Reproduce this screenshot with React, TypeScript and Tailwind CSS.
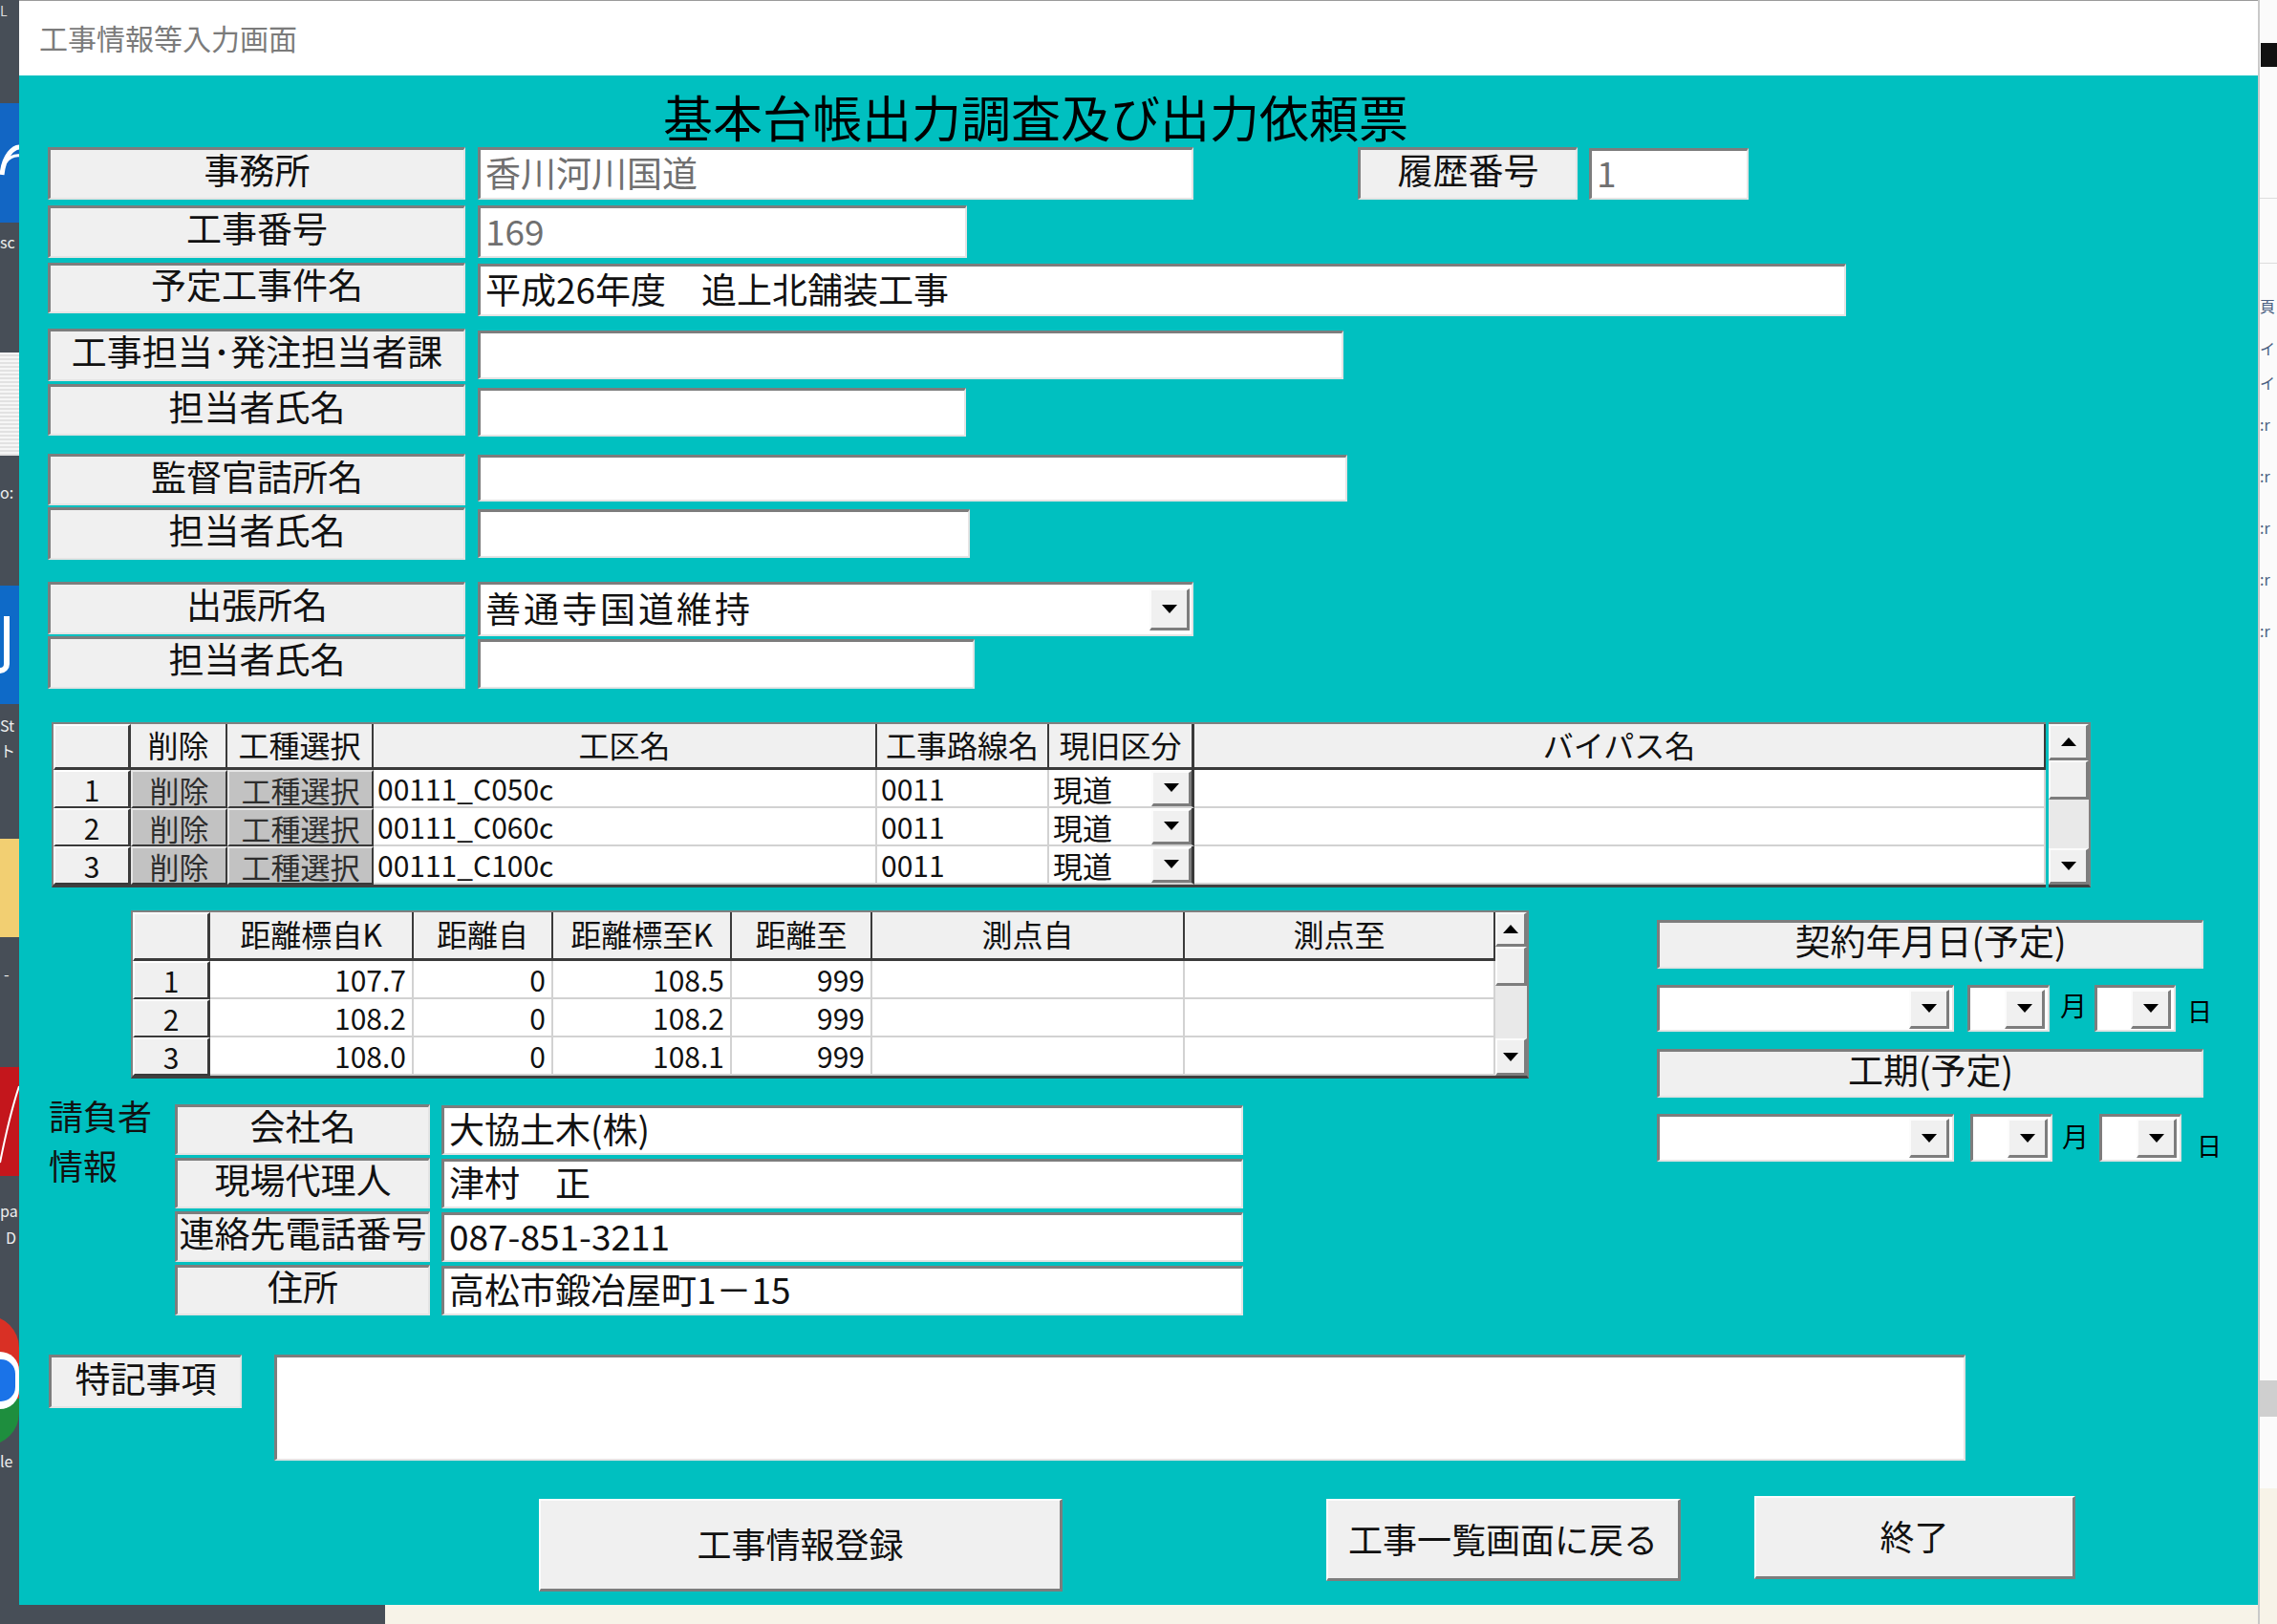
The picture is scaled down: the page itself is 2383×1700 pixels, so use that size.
import React from "react";

type P = { className?: string; children?: React.ReactNode };

const SUNKEN =
  "border-t-[3px] border-l-[3px] border-b-2 border-r-2 border-t-[#7d7d7d] border-l-[#7d7d7d] border-b-[#e4e4e4] border-r-[#e4e4e4]";
const RAISED =
  "border-t-2 border-l-2 border-b-[3px] border-r-[3px] border-t-[#fcfcfc] border-l-[#fcfcfc] border-b-[#7d7d7d] border-r-[#7d7d7d]";

function Label({ className = "", children }: P) {
  return (
    <div
      className={`${SUNKEN} bg-[#f0f0f0] flex items-center justify-center pb-[9px] text-[37px] leading-none text-[#111] whitespace-nowrap shrink-0 ${className}`}
    >
      {children}
    </div>
  );
}

function Field({ className = "", children, gray = false }: P & { gray?: boolean }) {
  return (
    <div
      className={`${SUNKEN} bg-white flex items-center pl-[5px] pb-[4px] text-[37px] leading-none whitespace-nowrap shrink-0 ${
        gray ? "text-[#707070]" : "text-[#111]"
      } ${className}`}
    >
      {children}
    </div>
  );
}

function Tri({ up = false }: { up?: boolean }) {
  return (
    <svg width="16" height="9" viewBox="0 0 16 9">
      <polygon points={up ? "0,9 16,9 8,0" : "0,0 16,0 8,9"} fill="#000" />
    </svg>
  );
}

function DropBtn({ className = "" }: P) {
  return (
    <div className={`${RAISED} bg-[#f0f0f0] flex items-center justify-center shrink-0 ${className}`}>
      <Tri />
    </div>
  );
}

function Combo({ className = "", btn = "", children }: P & { btn?: string }) {
  return (
    <div className={`${SUNKEN} bg-white flex items-center justify-between shrink-0 ${className}`}>
      <div className="pl-[5px] pb-[4px] text-[37px] leading-none whitespace-nowrap tracking-[3px]">{children}</div>
      <DropBtn className={btn} />
    </div>
  );
}

function Button({ className = "", children }: P) {
  return (
    <div
      className={`${RAISED} bg-[#f0f0f0] flex items-center justify-center pb-[4px] text-[36px] leading-none text-[#111] whitespace-nowrap shrink-0 ${className}`}
    >
      {children}
    </div>
  );
}

function VScroll({ className = "", upH, thumbH, downH }: P & { upH: string; thumbH: string; downH: string }) {
  return (
    <div className={`flex flex-col bg-[#f0f0f0] border-t-2 border-b-[3px] border-r-2 border-t-[#808080] border-b-[#404040] border-r-[#808080] shrink-0 ${className}`}>
      <div className={`${RAISED} bg-[#f0f0f0] flex items-center justify-center ${upH}`}>
        <Tri up />
      </div>
      <div className={`${RAISED} bg-[#f0f0f0] ${thumbH}`} />
      <div className="flex-1 bg-[#e9e9e9]" />
      <div className={`${RAISED} bg-[#f0f0f0] flex items-center justify-center ${downH}`}>
        <Tri />
      </div>
    </div>
  );
}

const HDR =
  "bg-[#f0f0f0] border-r-2 border-b-[3px] border-r-[#3a3a3a] border-b-[#3a3a3a] flex items-center justify-center pb-[4px] text-[32px] leading-none text-[#111] whitespace-nowrap";
const CORNER =
  "bg-[#f0f0f0] border-t-2 border-l-2 border-t-white border-l-white border-r-[3px] border-b-[3px] border-r-[#3a3a3a] border-b-[#3a3a3a]";
const ROWHDR =
  "bg-[#f0f0f0] border-t-2 border-l-2 border-t-white border-l-white border-r-[3px] border-b-2 border-r-[#3a3a3a] border-b-[#3a3a3a] flex items-center justify-center text-[30px] leading-none text-[#111]";
const BTNCELL =
  "bg-[#c2c2c2] border-t-2 border-l-2 border-t-[#e6e6e6] border-l-[#e6e6e6] border-r-2 border-b-2 border-r-[#3a3a3a] border-b-[#3a3a3a] flex items-center justify-center text-[31px] leading-none text-[#2e2e2e] whitespace-nowrap";
const CELL =
  "bg-white border-r-2 border-b-2 border-r-[#d2d2d2] border-b-[#d2d2d2] flex items-center pl-[4px] text-[30px] leading-none text-[#111] whitespace-nowrap";
const NUMCELL =
  "bg-white border-r-2 border-b-2 border-r-[#d2d2d2] border-b-[#d2d2d2] flex items-center justify-end pr-[6px] text-[30px] leading-none text-[#111] whitespace-nowrap";

function Grid1() {
  const rows = [
    ["1", "00111_C050c"],
    ["2", "00111_C060c"],
    ["3", "00111_C100c"],
  ];
  return (
    <div className="mt-[35px] ml-[4px] flex h-[173px] shrink-0">
      <div className="w-[2087px] border-t-2 border-l-2 border-b-[3px] border-t-[#808080] border-l-[#808080] border-b-[#404040] grid grid-cols-[81px_101px_153px_527px_180px_152px_891px] grid-rows-[48px_40px_40px_40px]">
        <div className={CORNER} />
        <div className={HDR}>削除</div>
        <div className={HDR}>工種選択</div>
        <div className={HDR}>工区名</div>
        <div className={HDR}>工事路線名</div>
        <div className={`${HDR} border-r-[3px]`}>現旧区分</div>
        <div className={`${HDR} border-r-0`}>バイパス名</div>
        {rows.map((r) => (
          <React.Fragment key={r[0]}>
            <div className={ROWHDR}>{r[0]}</div>
            <div className={BTNCELL}>削除</div>
            <div className={BTNCELL}>工種選択</div>
            <div className={CELL}>{r[1]}</div>
            <div className={CELL}>0011</div>
            <div className="bg-white border-r-[3px] border-b-2 border-r-[#3a3a3a] border-b-[#d2d2d2] flex items-center justify-between text-[31px] leading-none text-[#111]">
              <span className="pl-[4px]">現道</span>
              <DropBtn className="w-[42px] h-[37px]" />
            </div>
            <div className={`${CELL} border-r-0`} />
          </React.Fragment>
        ))}
      </div>
      <VScroll className="ml-[3px] w-[44px]" upH="h-[38px]" thumbH="h-[41px]" downH="h-[38px]" />
    </div>
  );
}

function Grid2() {
  const rows = [
    ["1", "107.7", "0", "108.5", "999"],
    ["2", "108.2", "0", "108.2", "999"],
    ["3", "108.0", "0", "108.1", "999"],
  ];
  return (
    <div className="ml-[87px] flex h-[176px] shrink-0">
      <div className="w-[1428px] border-t-2 border-l-2 border-b-[3px] border-t-[#808080] border-l-[#808080] border-b-[#404040] grid grid-cols-[81px_213px_146px_187px_147px_327px_325px] grid-rows-[51px_40px_40px_40px]">
        <div className={CORNER} />
        <div className={HDR}>距離標自K</div>
        <div className={HDR}>距離自</div>
        <div className={HDR}>距離標至K</div>
        <div className={HDR}>距離至</div>
        <div className={HDR}>測点自</div>
        <div className={`${HDR} border-r-0`}>測点至</div>
        {rows.map((r) => (
          <React.Fragment key={r[0]}>
            <div className={ROWHDR}>{r[0]}</div>
            <div className={NUMCELL}>{r[1]}</div>
            <div className={NUMCELL}>{r[2]}</div>
            <div className={NUMCELL}>{r[3]}</div>
            <div className={NUMCELL}>{r[4]}</div>
            <div className={CELL} />
            <div className={`${CELL} border-r-0`} />
          </React.Fragment>
        ))}
      </div>
      <VScroll className="w-[35px]" upH="h-[36px]" thumbH="h-[41px]" downH="h-[39px]" />
    </div>
  );
}

function RightPanel() {
  return (
    <div className="ml-[134px] mt-[10px] flex flex-col w-[572px] shrink-0">
      <Label className="w-[572px] h-[51px] text-[36px]">契約年月日(予定)</Label>
      <div className="mt-[17px] flex items-center h-[49px]">
        <Combo className="w-[311px] h-[49px]" btn="w-[42px] h-[41px] mr-[3px]" />
        <Combo className="ml-[14px] w-[86px] h-[49px]" btn="w-[42px] h-[41px] mr-[3px]" />
        <span className="ml-[11px] mb-[8px] text-[28px] leading-none text-black">月</span>
        <Combo className="ml-[8px] w-[85px] h-[49px]" btn="w-[42px] h-[41px] mr-[3px]" />
        <span className="ml-[12px] mt-[4px] text-[26px] leading-none text-black">日</span>
      </div>
      <Label className="mt-[18px] w-[572px] h-[51px] text-[36px]">工期(予定)</Label>
      <div className="mt-[17px] flex items-center h-[50px]">
        <Combo className="w-[311px] h-[50px]" btn="w-[42px] h-[41px] mr-[3px]" />
        <Combo className="ml-[17px] w-[86px] h-[50px]" btn="w-[42px] h-[41px] mr-[3px]" />
        <span className="ml-[10px] mb-[4px] text-[28px] leading-none text-black">月</span>
        <Combo className="ml-[11px] w-[86px] h-[50px]" btn="w-[42px] h-[41px] mr-[3px]" />
        <span className="ml-[16px] mt-[16px] text-[26px] leading-none text-black">日</span>
      </div>
    </div>
  );
}

function LeftStrip() {
  return (
    <div className="w-[20px] h-[1700px] bg-[#474e57] flex flex-col overflow-hidden shrink-0 text-white text-[16px] leading-none">
      <div className="h-[108px] pt-[4px] text-[14px] text-[#ddd]">L</div>
      <div className="h-[125px] bg-[#1266c4] relative overflow-hidden">
        <svg width="20" height="125" viewBox="0 0 20 125">
          <path d="M2 75 C 4 55, 14 45, 22 46" stroke="#fff" strokeWidth="5" fill="none" />
          <path d="M6 62 C 10 56, 16 54, 22 55" stroke="#fff" strokeWidth="3" fill="none" />
        </svg>
      </div>
      <div className="h-[136px] pt-[12px] text-[#eee]">sc</div>
      <div className="h-[108px] bg-[repeating-linear-gradient(0deg,#e2e2e2_0px,#e2e2e2_2px,#f6f6f6_2px,#f6f6f6_4px)]" />
      <div className="h-[136px] pt-[30px] text-[#eee]">o:</div>
      <div className="h-[124px] bg-[#0e6ac8] flex items-center">
        <div className="w-[10px] h-[60px] border-r-[6px] border-b-[6px] border-white rounded-br-[10px]" />
      </div>
      <div className="h-[141px] pt-[14px] text-[#eee] flex flex-col gap-[10px]">
        <span>St</span>
        <span>ト</span>
      </div>
      <div className="h-[103px] bg-[#f2cf72]" />
      <div className="h-[136px] pt-[30px] pl-[4px] text-[#eee]">-</div>
      <div className="h-[114px] bg-[#c4161c] relative overflow-hidden">
        <svg width="20" height="114" viewBox="0 0 20 114">
          <path d="M20 20 C 10 50, 4 80, 0 100" stroke="#fff" strokeWidth="2" fill="none" />
        </svg>
      </div>
      <div className="h-[146px] pt-[28px] text-[#eee] flex flex-col gap-[12px]">
        <span>pa</span>
        <span className="pl-[6px]">D</span>
      </div>
      <div className="h-[136px] relative overflow-hidden">
        <div className="absolute left-[-48px] top-0 w-[68px] h-[136px] rounded-full bg-[conic-gradient(#d93025_0deg_120deg,#1e8e3e_120deg_240deg,#fbbc04_240deg_360deg)]" />
        <div className="absolute left-[-20px] top-[38px] w-[40px] h-[60px] rounded-full bg-white" />
        <div className="absolute left-[-14px] top-[46px] w-[30px] h-[44px] rounded-full bg-[#1a73e8]" />
      </div>
      <div className="flex-1 pt-[8px] text-[#eee]">le</div>
    </div>
  );
}

function RightStrip() {
  return (
    <div className="w-[20px] h-[1700px] bg-[#fbfbfb] flex flex-col overflow-hidden shrink-0 border-l-2 border-l-[#c9c9c9] text-[#4a5f82] text-[16px] leading-none">
      <div className="h-[45px]" />
      <div className="h-[25px] ml-[1px] bg-[#111]" />
      <div className="h-[138px] border-b border-b-[#dddddd]" />
      <div className="h-[68px] border-b border-b-[#dddddd]" />
      <div className="h-[36px]" />
      <div className="h-[44px]">頁</div>
      <div className="h-[36px]">イ</div>
      <div className="h-[44px]">イ</div>
      <div className="h-[54px]">:r</div>
      <div className="h-[54px]">:r</div>
      <div className="h-[54px]">:r</div>
      <div className="h-[54px]">:r</div>
      <div className="h-[54px]">:r</div>
      <div className="h-[739px]" />
      <div className="h-[38px] bg-[#cfcfcf]" />
      <div className="h-[75px] bg-[#fbfbfb]" />
      <div className="flex-1 bg-[#f7f3e8]" />
    </div>
  );
}

export default function App() {
  return (
    <div className="w-[2383px] h-[1700px] flex overflow-hidden bg-[#f7f3e8] font-['Noto_Sans_CJK_JP','Noto_Sans',sans-serif]">
      <LeftStrip />
      <div className="w-[2343px] h-[1700px] flex flex-col shrink-0">
        <div className="h-[1680px] flex flex-col">
          {/* title bar */}
          <div className="h-[79px] bg-white border-t border-t-[#9a9a9a] flex items-center pl-[21px] pb-[2px] text-[30px] leading-none text-[#7b7b7b] shrink-0">
            工事情報等入力画面
          </div>
          {/* body */}
          <div className="flex-1 bg-[#00c0c0] flex flex-col pl-[30px] text-[#111]">
            <div className="mt-[18px] h-[50px] pl-[644px] text-[52px] leading-[50px] text-black whitespace-nowrap">
              基本台帳出力調査及び出力依頼票
            </div>

            {/* R1 */}
            <div className="mt-[7px] flex items-center h-[55px]">
              <Label className="w-[437px] h-[55px]">事務所</Label>
              <Field gray className="ml-[13px] w-[749px] h-[55px]">
                香川河川国道
              </Field>
              <Label className="ml-[172px] w-[230px] h-[55px]">履歴番号</Label>
              <Field gray className="ml-[12px] w-[167px] h-[54px]">
                1
              </Field>
            </div>
            {/* R2 */}
            <div className="mt-[6px] flex items-center h-[55px]">
              <Label className="w-[437px] h-[55px]">工事番号</Label>
              <Field gray className="ml-[13px] w-[512px] h-[55px]">
                169
              </Field>
            </div>
            {/* R3 */}
            <div className="mt-[5px] flex items-start h-[56px]">
              <Label className="w-[437px] h-[53px]">予定工事件名</Label>
              <Field className="ml-[13px] mt-[1px] w-[1432px] h-[55px]">平成26年度　追上北舗装工事</Field>
            </div>
            {/* R4 */}
            <div className="mt-[13px] flex items-center h-[55px]">
              <Label className="w-[437px] h-[55px]">工事担当･発注担当者課</Label>
              <Field className="ml-[13px] w-[906px] h-[51px]" />
            </div>
            {/* R5 */}
            <div className="mt-[3px] flex items-start h-[55px]">
              <Label className="w-[437px] h-[54px]">担当者氏名</Label>
              <Field className="ml-[13px] mt-[4px] w-[511px] h-[51px]" />
            </div>
            {/* R6 */}
            <div className="mt-[18px] flex items-start h-[54px]">
              <Label className="w-[437px] h-[54px]">監督官詰所名</Label>
              <Field className="ml-[13px] mt-[1px] w-[910px] h-[49px]" />
            </div>
            {/* R7 */}
            <div className="mt-[2px] flex items-start h-[55px]">
              <Label className="w-[437px] h-[55px]">担当者氏名</Label>
              <Field className="ml-[13px] mt-[2px] w-[515px] h-[51px]" />
            </div>
            {/* R8 */}
            <div className="mt-[23px] flex items-start h-[57px]">
              <Label className="w-[437px] h-[55px]">出張所名</Label>
              <Combo className="ml-[13px] w-[749px] h-[57px]" btn="w-[42px] h-[44px] mr-[2px]">
                善通寺国道維持
              </Combo>
            </div>
            {/* R9 */}
            <div className="mt-[0px] flex items-start h-[55px]">
              <Label className="w-[437px] h-[55px]">担当者氏名</Label>
              <Field className="ml-[13px] mt-[3px] w-[520px] h-[52px]" />
            </div>

            <Grid1 />

            <div className="mt-[24px] flex items-start">
              <div className="flex flex-col w-[1550px] shrink-0">
                <Grid2 />

                {/* 請負者情報 */}
                <div className="mt-[12px] flex items-start">
                  <div className="w-[133px] pl-[1px] text-[36px] leading-[52px] text-[#111] shrink-0">
                    請負者
                    <br />
                    情報
                  </div>
                  <div className="mt-[15px] flex flex-col gap-[3px]">
                    {[
                      ["会社名", "大協土木(株)"],
                      ["現場代理人", "津村　正"],
                      ["連絡先電話番号", "087-851-3211"],
                      ["住所", "高松市鍛冶屋町1－15"],
                    ].map(([l, v]) => (
                      <div key={l} className="flex items-center h-[53px]">
                        <Label className="w-[267px] h-[53px]">{l}</Label>
                        <Field className="ml-[12px] w-[839px] h-[52px]">{v}</Field>
                      </div>
                    ))}
                  </div>
                </div>
              </div>
              <RightPanel />
            </div>

            {/* 特記事項 */}
            <div className="mt-[41px] flex items-start">
              <Label className="ml-[1px] w-[202px] h-[56px]">特記事項</Label>
              <div className={`${SUNKEN} ml-[34px] w-[1770px] h-[111px] bg-white shrink-0`} />
            </div>

            {/* buttons */}
            <div className="mt-[37px] flex items-start">
              <Button className="ml-[514px] mt-[3px] w-[548px] h-[97px]">工事情報登録</Button>
              <Button className="ml-[276px] mt-[3px] w-[371px] h-[86px]">工事一覧画面に戻る</Button>
              <Button className="ml-[77px] w-[336px] h-[87px]">終了</Button>
            </div>
          </div>
        </div>
        <div className="h-[20px] flex shrink-0">
          <div className="w-[383px] bg-[#474e57]" />
          <div className="flex-1 bg-[#f7f3e8]" />
        </div>
      </div>
      <RightStrip />
    </div>
  );
}
